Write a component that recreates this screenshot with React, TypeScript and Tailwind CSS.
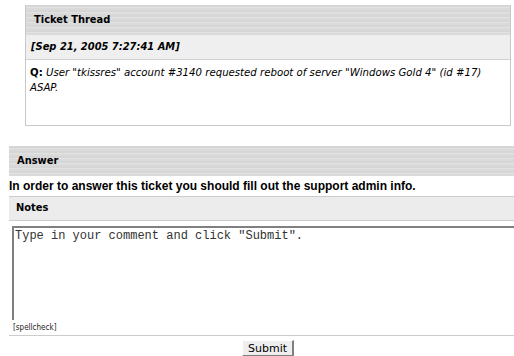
import React from 'react'

const stripes =
  'bg-[repeating-linear-gradient(180deg,#d6d6d6_0px,#d6d6d6_2px,#e2e2e2_2px,#e2e2e2_3px,#dadada_3px,#dadada_5px)]'

const sans = "font-['DejaVu_Sans_Condensed','DejaVu_Sans',sans-serif]"

export default function App() {
  return (
    <div className={`w-[514px] h-[356px] overflow-hidden bg-white text-black ${sans}`}>
      {/* Ticket Thread */}
      <div className="ml-[25px] mt-[5px] w-[486px] border-x border-b border-[#c8c8c8]">
        <div className={`h-[30px] flex items-center pl-[8px] text-[11px] font-bold ${stripes}`}>
          Ticket Thread
        </div>
        <div className="h-[25px] flex items-center pl-[5px] bg-[#efefef] border-b border-[#d0d0d0] text-[11px] font-bold italic">
          [Sep 21, 2005 7:27:41 AM]
        </div>
        <div className="h-[65px] pl-[4px] pt-[5px] pr-[28px] text-[11.3px] leading-[15px]">
          <span className="font-bold">Q:</span>{' '}
          <span className="italic">
            User "tkissres" account #3140 requested reboot of server "Windows Gold 4" (id #17) ASAP.
          </span>
        </div>
      </div>

      {/* Answer */}
      <div className="ml-[9px] mt-[20px]">
        <div className={`h-[30px] flex items-center pl-[8px] text-[11px] font-bold ${stripes}`}>
          Answer
        </div>
        <div className="h-[20px] flex items-center font-['Liberation_Sans',sans-serif] text-[12px] font-bold">
          In order to answer this ticket you should fill out the support admin info.
        </div>
        <div className="h-[25px] flex items-center pl-[7px] bg-[#ececec] border-y border-[#cccccc] text-[11px] font-bold">
          Notes
        </div>
        <div className="pt-[5px] pl-[3px]">
          <textarea
            className="block w-[510px] h-[94px] resize-none bg-white border-t-2 border-l-2 border-[#808080] pl-[1px] pt-[1px] font-['Liberation_Mono',monospace] text-[12px] leading-[14px] text-[#333] placeholder:text-[#333] outline-none"
            placeholder='Type in your comment and click "Submit".'
          />
        </div>
        <div className="h-[16px] flex items-center pl-[4px] text-[8px] text-[#222] border-b border-[#cccccc]">
          [spellcheck]
        </div>
        <div className="flex justify-center pt-[4px] pl-[13px]">
          <button className="w-[52px] h-[17px] bg-[#eeeeee] border-r-2 border-b-2 border-[#808080] border-l border-t border-l-white border-t-white font-['DejaVu_Sans',sans-serif] text-[11px] leading-none">
            Submit
          </button>
        </div>
      </div>
    </div>
  )
}
